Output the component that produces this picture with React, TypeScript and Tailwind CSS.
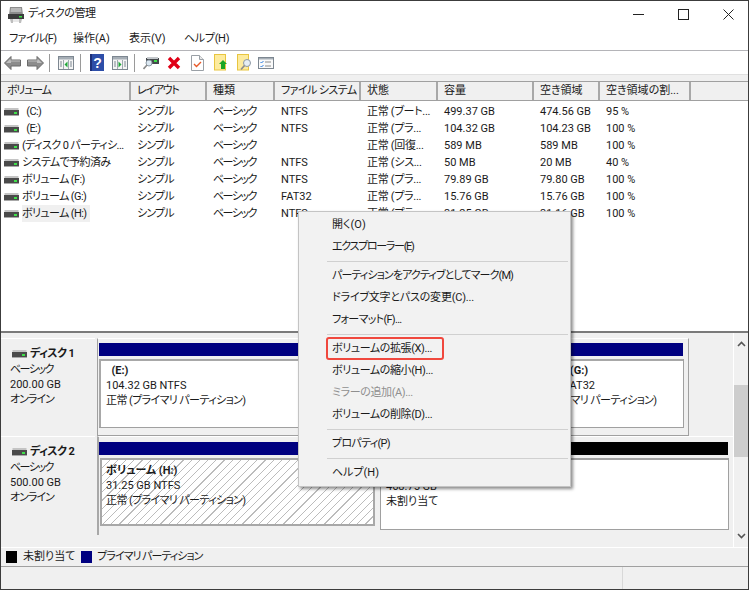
const font = "font-['Roboto','Noto_Sans_CJK_JP',sans-serif] [font-feature-settings:'palt']";

function Drive({ className = "" }: { className?: string }) {
  return (
    <svg width="15" height="8" viewBox="0 0 15 8" className={className}>
      <rect x="0.5" y="0" width="14" height="2" fill="#c4c4c4" />
      <rect x="0" y="2" width="15" height="5" fill="#4a4a4a" />
      <rect x="0" y="7" width="15" height="1" fill="#a8a8a8" />
      <rect x="10" y="4" width="3" height="2" fill="#3fe04a" />
    </svg>
  );
}

function AppIcon() {
  return (
    <svg width="18" height="18" viewBox="0 0 18 18">
      <path d="M3 1h12l1 8H2z" fill="#8c8c8c" />
      <path d="M4 2h10l.5 4h-11z" fill="#b8b8b8" />
      <rect x="1" y="8" width="16" height="5" fill="#3c3c3c" />
      <rect x="12" y="10" width="3" height="1.5" fill="#3fe04a" />
      <path d="M3 13h3v4H4zM12 13h3l-1 4h-2z" fill="#bdbdbd" />
      <rect x="6" y="13" width="6" height="3" fill="#e8e8e8" />
    </svg>
  );
}

function Arrow({ flip = false }: { flip?: boolean }) {
  return (
    <svg width="17" height="14" viewBox="0 0 17 14" className={flip ? "-scale-x-100" : ""}>
      <path d="M7 .5.5 7 7 13.5V10h9.5V4H7z" fill="#8c8c8c" stroke="#6a6a6a" />
      <path d="M6.5 2.5 2 7h5V5.5h9V4.5H6.5z" fill="#c0c0c0" />
    </svg>
  );
}

function Pane({ dir }: { dir: "left" | "right" }) {
  return (
    <svg width="16" height="14" viewBox="0 0 16 14">
      <rect x="0.5" y="0.5" width="15" height="13" fill="#f5f5f5" stroke="#7d8791" />
      <rect x="1" y="1" width="14" height="2.5" fill="#a6aeb6" />
      <path d="M5.5 4v9M10.5 4v9" stroke="#a0a8b0" fill="none" />
      <path d="M2 6h2M2 8h2M2 10h2M12 6h2M12 8h2M12 10h2" stroke="#7d8791" fill="none" />
      {dir === "left" ? (
        <path d="M9.5 5.5v6L6.5 8.5z" fill="#1fa838" />
      ) : (
        <path d="M6.5 5.5v6l3-3z" fill="#1fa838" />
      )}
    </svg>
  );
}

function Help() {
  return (
    <svg width="14" height="17" viewBox="0 0 14 17">
      <rect width="14" height="17" fill="#2d4ea8" />
      <rect x="0" y="0" width="2" height="17" fill="#1c2f78" />
      <text x="7.5" y="13.5" fontSize="14" fontWeight="700" fill="#ffffff" textAnchor="middle" fontFamily="Liberation Sans">?</text>
    </svg>
  );
}

function Connect() {
  return (
    <svg width="16" height="14" viewBox="0 0 16 14">
      <rect x="3" y="2" width="13" height="6" fill="#45494d" />
      <rect x="4" y="1" width="11" height="2" fill="#c4c8cc" />
      <rect x="11" y="4" width="3" height="2" fill="#3fe04a" />
      <circle cx="6" cy="7" r="3" fill="#dbe8f2" stroke="#8d9aa6" />
      <path d="M4 9 0.5 13" stroke="#8a8a8a" strokeWidth="1.6" fill="none" />
    </svg>
  );
}

function RedX() {
  return (
    <svg width="14" height="14" viewBox="0 0 14 14">
      <path d="M2 2l10 10M12 2 2 12" stroke="#e00016" strokeWidth="3.4" fill="none" />
    </svg>
  );
}

function Sheet() {
  return (
    <svg width="13" height="16" viewBox="0 0 13 16">
      <path d="M.5.5h8l4 4v11H.5z" fill="#ffffff" stroke="#9aa0a6" />
      <path d="M8.5.5v4h4" fill="#e8e8e8" stroke="#9aa0a6" />
      <path d="M3 9l2.5 2.5L10 7" stroke="#e85a2a" strokeWidth="1.4" fill="none" />
    </svg>
  );
}

function Folder({ kind }: { kind: "up" | "find" }) {
  return (
    <svg width="15" height="17" viewBox="0 0 15 17">
      <rect x="0.5" y="0.5" width="11" height="15.5" fill="#fdeb9e" stroke="#e8c540" />
      {kind === "up" ? (
        <path d="M9 6l4 4h-2v5H7v-5H5z" fill="#19a526" />
      ) : (
        <>
          <circle cx="10" cy="9" r="3.5" fill="#e6eef4" stroke="#8c98a4" />
          <path d="M7.5 11.5 4 15.5" stroke="#8c8c8c" strokeWidth="1.6" fill="none" />
        </>
      )}
    </svg>
  );
}

function Checklist() {
  return (
    <svg width="16" height="12" viewBox="0 0 16 12">
      <rect x="0.5" y="0.5" width="15" height="11" fill="#fafafa" stroke="#7d8791" />
      <rect x="1" y="1" width="14" height="1.5" fill="#a6aeb6" />
      <path d="M2.5 5l1 1 2-2M2.5 9l1 1 2-2" stroke="#2f7fe0" fill="none" />
      <path d="M7 5h6M7 9h6" stroke="#8a8a8a" fill="none" />
    </svg>
  );
}

const columns = [
  { label: "ボリューム", w: "w-[130px]", head: "tracking-[-1.2px]", cell: "" },
  { label: "レイアウト", w: "w-[76px]", head: "tracking-[-1.3px]", cell: "tracking-[-0.8px]" },
  { label: "種類", w: "w-[68px]", head: "", cell: "tracking-[-1.5px]" },
  { label: "ファイル システム", w: "w-[86px]", head: "tracking-[-0.6px]", cell: "" },
  { label: "状態", w: "w-[77px]", head: "", cell: "tracking-[-0.3px]" },
  { label: "容量", w: "w-[96px]", head: "", cell: "" },
  { label: "空き領域", w: "w-[66px]", head: "", cell: "" },
  { label: "空き領域の割...", w: "w-[91px]", head: "", cell: "" },
];

const rows = [
  ["  (C:)", "シンプル", "ベーシック", "NTFS", "正常 (ブート...", "499.37 GB", "474.56 GB", "95 %"],
  ["  (E:)", "シンプル", "ベーシック", "NTFS", "正常 (プラ...", "104.32 GB", "104.23 GB", "100 %"],
  ["(ディスク 0 パーティシ...", "シンプル", "ベーシック", "", "正常 (回復...", "589 MB", "589 MB", "100 %"],
  ["システムで予約済み", "シンプル", "ベーシック", "NTFS", "正常 (シス...", "50 MB", "20 MB", "40 %"],
  ["ボリューム (F:)", "シンプル", "ベーシック", "NTFS", "正常 (プラ...", "79.89 GB", "79.80 GB", "100 %"],
  ["ボリューム (G:)", "シンプル", "ベーシック", "FAT32", "正常 (プラ...", "15.76 GB", "15.76 GB", "100 %"],
  ["ボリューム (H:)", "シンプル", "ベーシック", "NTFS", "正常 (プラ...", "31.25 GB", "31.16 GB", "100 %"],
];

function ListRow({ cells, selected }: { cells: string[]; selected: boolean }) {
  return (
    <div className="flex h-[17px] items-center text-[11px] leading-[17px] text-[#1a1a1a]">
      {cells.map((c, i) =>
        i === 0 ? (
          <div key={i} className="flex w-[130px] shrink-0 items-center pl-[3px]">
            <Drive className="shrink-0" />
            <span className={`ml-[3px] whitespace-pre pr-[3px] tracking-[-0.6px] ${selected ? "bg-[#f0f0f0]" : ""}`}>{c}</span>
          </div>
        ) : (
          <div key={i} className={`${columns[i].w} ${columns[i].cell} shrink-0 overflow-hidden whitespace-pre pl-[6px]`}>
            {c}
          </div>
        )
      )}
    </div>
  );
}

function DiskLabel({ name, size }: { name: string; size: string }) {
  return (
    <div className="flex w-[94px] shrink-0 flex-col border-t border-white bg-[#f0f0f0] pl-[9px] pt-[6px] text-[11px] leading-[15px] text-[#1a1a1a]">
      <div className="ml-[2px] flex h-[17px] items-center gap-[3px] font-bold">
        <Drive />
        <span className="tracking-[-0.6px]">{name}</span>
      </div>
      <div className="tracking-[-1.5px]">ベーシック</div>
      <div>{size}</div>
      <div className="tracking-[-1px]">オンライン</div>
    </div>
  );
}

function MenuItem({ children, disabled, highlight, fit = "" }: { children: string; disabled?: boolean; highlight?: boolean; fit?: string }) {
  return (
    <div className={`relative flex h-[22px] items-center pl-[33px] text-[11px] ${fit} ${disabled ? "text-[#8f8f8f]" : "text-[#1a1a1a]"}`}>
      {children}
      {highlight && (
        <div className="absolute left-[27px] top-[-1px] h-[23px] w-[118px] rounded-[3px] border-2 border-[#f0483e]" />
      )}
    </div>
  );
}

function MenuSep() {
  return (
    <div className="flex h-[7px] items-center pl-[28px] pr-[2px]">
      <div className="h-px w-full bg-[#d0d0d0]" />
    </div>
  );
}

export default function App() {
  return (
    <div className={`${font} relative flex h-[590px] w-[749px] flex-col overflow-hidden border border-[#3c3c3c] bg-[#f0f0f0]`}>
      {/* title bar */}
      <div className="flex h-[27px] shrink-0 items-center bg-white pl-[6px]">
        <AppIcon />
        <span className="ml-[3px] text-[11px] tracking-[-0.4px] text-[#1a1a1a]">ディスクの管理</span>
        <div className="ml-auto flex items-center gap-[34px] pr-[14px]">
          <svg width="11" height="11" viewBox="0 0 11 11"><path d="M0 5.5h11" stroke="#222" fill="none" /></svg>
          <svg width="11" height="11" viewBox="0 0 11 11"><rect x="0.5" y="0.5" width="10" height="10" fill="none" stroke="#222" /></svg>
          <svg width="11" height="11" viewBox="0 0 11 11"><path d="M.5.5l10 10M10.5.5l-10 10" stroke="#222" fill="none" /></svg>
        </div>
      </div>
      {/* menu bar */}
      <div className="flex h-[23px] shrink-0 items-center border-b border-[#b4b4b8] bg-white pl-[8px] text-[11px] text-[#1a1a1a]">
        <span className="w-[64px] tracking-[-0.6px]">ファイル(F)</span>
        <span className="w-[56px]">操作(A)</span>
        <span className="w-[55px]">表示(V)</span>
        <span className="tracking-[-0.3px]">ヘルプ(H)</span>
      </div>
      {/* toolbar */}
      <div className="flex h-[23px] shrink-0 items-center bg-white pl-[3px]">
        <Arrow />
        <div className="w-[6px]" />
        <Arrow flip />
        <div className="ml-[5px] mr-[8px] h-[18px] w-px bg-[#9a9a9a]" />
        <Pane dir="left" />
        <div className="ml-[6px] mr-[9px] h-[18px] w-px bg-[#9a9a9a]" />
        <Help />
        <div className="w-[8px]" />
        <Pane dir="right" />
        <div className="ml-[6px] mr-[8px] h-[18px] w-px bg-[#9a9a9a]" />
        <Connect />
        <div className="w-[8px]" />
        <RedX />
        <div className="w-[10px]" />
        <Sheet />
        <div className="w-[10px]" />
        <Folder kind="up" />
        <div className="w-[8px]" />
        <Folder kind="find" />
        <div className="w-[6px]" />
        <Checklist />
      </div>
      <div className="h-[7px] shrink-0 border-t border-[#e0e0e0] bg-[#f0f0f0]" />
      {/* list */}
      <div className="flex h-[250px] shrink-0 flex-col bg-white">
        <div className="flex h-[20px] shrink-0 border-y border-[#a0a0a0] bg-[#f0f0f0] text-[11px] text-[#1a1a1a]">
          {columns.map((c) => (
            <div key={c.label} className={`${c.w} ${c.head} shrink-0 overflow-hidden whitespace-nowrap border-r-2 border-[#a8a8a8] pl-[6px] leading-[18px]`}>
              {c.label}
            </div>
          ))}
        </div>
        <div className="flex flex-col pt-[2px]">
          {rows.map((r, i) => (
            <ListRow key={i} cells={r} selected={i === 6} />
          ))}
        </div>
      </div>
      {/* graphical view */}
      <div className="flex h-[216px] shrink-0 border-t-2 border-[#7a7a7a] bg-[#f0f0f0]">
        <div className="flex w-[732px] flex-col pt-[5px]">
          {/* disk 1 */}
          <div className="flex h-[98px] shrink-0 text-[11px] leading-[15px] text-[#1a1a1a]">
            <DiskLabel name="ディスク 1" size="200.00 GB" />
            <div className="ml-[2px] h-[98px] w-[592px] border border-[#a0a0a0] border-t-white bg-[#f0f0f0] p-[4px_4px_7px_1px]">
              <div className="h-[13px] w-[584px] bg-[#000080]" />
              <div className="mt-[3px] flex h-[69px] border-b border-r border-[#a0a0a0]">
                <div className="h-full w-[411px] border-l-2 border-t-2 border-[#a8a8a8] bg-white pl-[5px] pt-[2px]">
                  <div className="whitespace-pre font-bold">  (E:)</div>
                  <div>104.32 GB NTFS</div>
                  <div className="tracking-[-0.6px]">正常 (プライマリ パーティション)</div>
                </div>
                <div className="h-full flex-1 border-l-2 border-t-2 border-[#a8a8a8] bg-white pl-[5px] pt-[2px]">
                  <div className="font-bold">ボリューム  (G:)</div>
                  <div>15.76 GB FAT32</div>
                  <div className="tracking-[-0.6px]">正常 (プライマリ パーティション)</div>
                </div>
              </div>
            </div>
          </div>
          {/* disk 2 */}
          <div className="flex h-[99px] shrink-0 text-[11px] leading-[15px] text-[#1a1a1a]">
            <DiskLabel name="ディスク 2" size="500.00 GB" />
            <div className="ml-[2px] flex-1 border-l-2 border-t border-[#a8a8a8] border-t-white pt-[5px]">
              <div className="flex h-[13px] w-[629px]">
                <div className="h-full w-[280px] bg-[#000080]" />
                <div className="h-full flex-1 bg-black" />
              </div>
              <div className="ml-px mt-[3px] flex h-[72px] gap-[5px]">
                <div className="h-[68px] w-[275px] border-2 border-[#a8a8a8] bg-[repeating-linear-gradient(135deg,#ffffff_0_5px,#bcbcbc_5px_5.8px)] pl-[4px] pt-[3px]">
                  <div className="font-bold">ボリューム  (H:)</div>
                  <div>31.25 GB NTFS</div>
                  <div className="tracking-[-0.6px]">正常 (プライマリ パーティション)</div>
                </div>
                <div className="h-full w-[349px] border border-[#a0a0a0] bg-white pl-[5px] pt-[19px] [border-top-width:2px]">
                  <div>468.75 GB</div>
                  <div>未割り当て</div>
                </div>
              </div>
            </div>
          </div>
        </div>
        {/* scrollbar */}
        <div className="flex w-[15px] flex-col items-center border-l border-white bg-[#f0f0f0]">
          <svg width="15" height="15" viewBox="0 0 15 15" className="mt-[4px]">
            <path d="M4 9l3.5-3.5L11 9" stroke="#555" strokeWidth="1.6" fill="none" />
          </svg>
          <div className="mt-[33px] h-[72px] w-full bg-[#cdcdcd]" />
          <div className="flex-1" />
          <svg width="15" height="15" viewBox="0 0 15 15" className="mb-[4px]">
            <path d="M4 6l3.5 3.5L11 6" stroke="#555" strokeWidth="1.6" fill="none" />
          </svg>
        </div>
      </div>
      {/* legend */}
      <div className="flex h-[19px] shrink-0 items-center border-t border-white bg-[#f0f0f0] pl-[5px] text-[11px] text-[#1a1a1a]">
        <div className="h-[12px] w-[11px] bg-black" />
        <span className="ml-[6px]">未割り当て</span>
        <div className="ml-[6px] h-[12px] w-[11px] bg-[#000080]" />
        <span className="ml-[5px] tracking-[-1px]">プライマリ パーティション</span>
      </div>
      {/* status bar */}
      <div className="flex flex-1 border-t border-[#a0a0a0] bg-[#f0f0f0]">
        <div className="w-[622px] border-r border-[#d8d8d8]" />
      </div>
      {/* context menu */}
      <div className="absolute left-[297px] top-[210px] flex h-[276px] w-[273px] flex-col border border-[#c4c4c4] bg-[#f2f2f2] pt-[2px] shadow-[2px_2px_3px_rgba(0,0,0,0.45)]">
        <MenuItem>開く(O)</MenuItem>
        <MenuItem fit="tracking-[-1.3px]">エクスプローラー(E)</MenuItem>
        <MenuSep />
        <MenuItem fit="tracking-[-0.9px]">パーティションをアクティブとしてマーク(M)</MenuItem>
        <MenuItem fit="tracking-[-0.2px]">ドライブ文字とパスの変更(C)...</MenuItem>
        <MenuItem fit="tracking-[-0.7px]">フォーマット(F)...</MenuItem>
        <MenuSep />
        <MenuItem highlight fit="tracking-[-0.4px]">ボリュームの拡張(X)...</MenuItem>
        <MenuItem fit="tracking-[-0.4px]">ボリュームの縮小(H)...</MenuItem>
        <MenuItem disabled fit="tracking-[-0.4px]">ミラーの追加(A)...</MenuItem>
        <MenuItem fit="tracking-[-0.4px]">ボリュームの削除(D)...</MenuItem>
        <MenuSep />
        <MenuItem fit="tracking-[-0.7px]">プロパティ(P)</MenuItem>
        <MenuSep />
        <MenuItem>ヘルプ(H)</MenuItem>
      </div>
    </div>
  );
}
